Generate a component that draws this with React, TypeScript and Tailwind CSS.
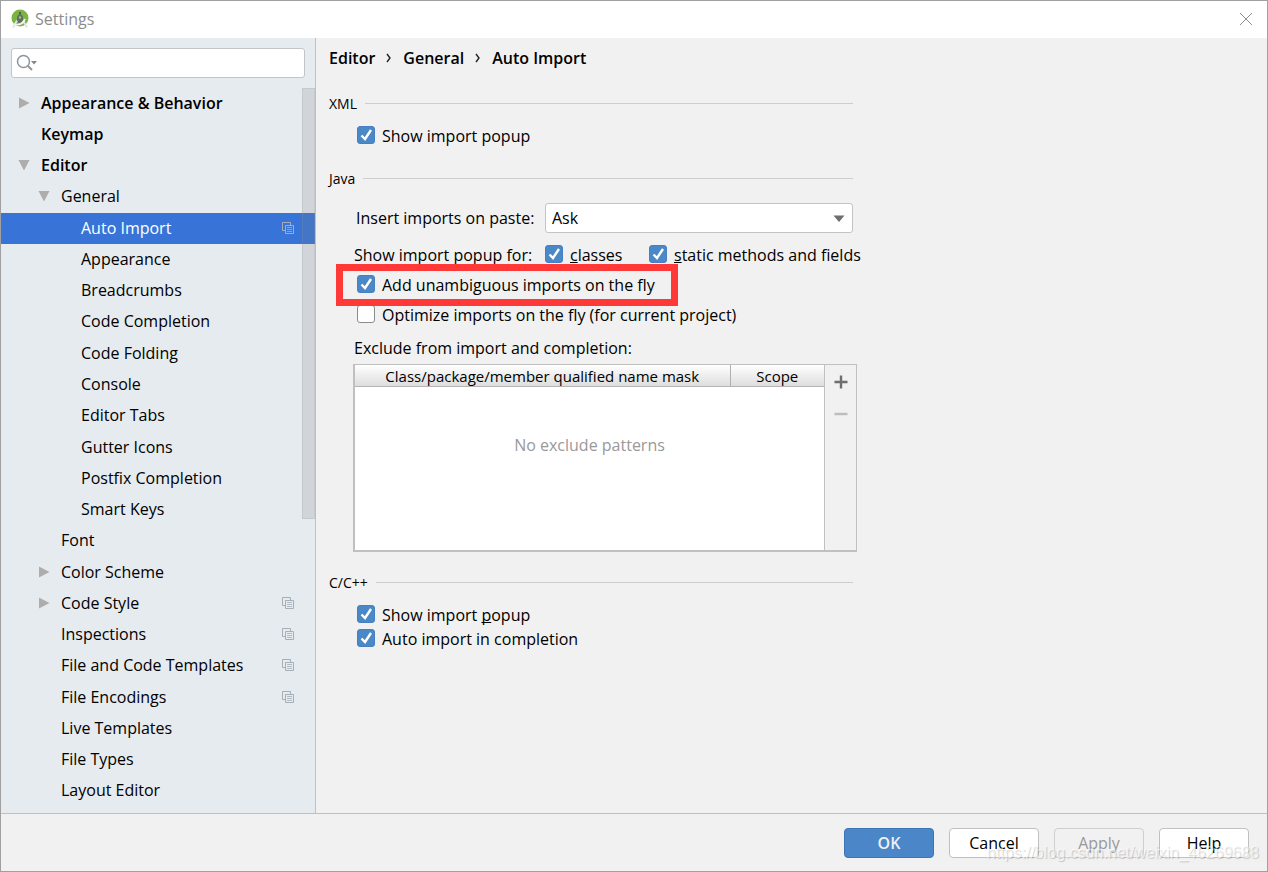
import { useState, type ReactNode } from 'react'
import { clsx } from 'clsx'

type TreeItem = {
  label: string
  level: 0 | 1 | 2
  state?: 'open' | 'closed'
  project?: boolean
}

const tree: TreeItem[] = [
  { label: 'Appearance & Behavior', level: 0, state: 'closed' },
  { label: 'Keymap', level: 0 },
  { label: 'Editor', level: 0, state: 'open' },
  { label: 'General', level: 1, state: 'open' },
  { label: 'Auto Import', level: 2, project: true },
  { label: 'Appearance', level: 2 },
  { label: 'Breadcrumbs', level: 2 },
  { label: 'Code Completion', level: 2 },
  { label: 'Code Folding', level: 2 },
  { label: 'Console', level: 2 },
  { label: 'Editor Tabs', level: 2 },
  { label: 'Gutter Icons', level: 2 },
  { label: 'Postfix Completion', level: 2 },
  { label: 'Smart Keys', level: 2 },
  { label: 'Font', level: 1 },
  { label: 'Color Scheme', level: 1, state: 'closed' },
  { label: 'Code Style', level: 1, state: 'closed', project: true },
  { label: 'Inspections', level: 1, project: true },
  { label: 'File and Code Templates', level: 1, project: true },
  { label: 'File Encodings', level: 1, project: true },
  { label: 'Live Templates', level: 1 },
  { label: 'File Types', level: 1 },
  { label: 'Layout Editor', level: 1 },
]

const indents = ['pl-[15px]', 'pl-[35px]', 'pl-[55px]']

function AppIcon() {
  return (
    <svg viewBox="0 0 18 20" className="h-5 w-[18px]" aria-hidden="true">
      <circle cx="9" cy="9" r="8.5" fill="#7cb342" />
      <path d="M9 3v3" stroke="#4b5b4b" strokeWidth="2" />
      <path d="M9 4l3 3.500v4L10.500 14h-3L6 11.500v-4z" fill="#5f6e66" />
      <circle cx="9" cy="8.5" r="1.2" fill="#9ccc65" />
      <path d="M6 11.500L2 18.500M12 11.500l4 7" stroke="#dfe4df" strokeWidth="1.8" />
      <path d="M3.500 15c4 1.500 9 0 10.500-5" stroke="#f3f6f0" strokeWidth="1.8" fill="none" />
    </svg>
  )
}

function Arrow({ state }: { state?: 'open' | 'closed' }) {
  return (
    <svg viewBox="0 0 16 16" className="h-4 w-4 shrink-0" fill="#adadad" aria-hidden="true">
      {state === 'closed' && <path d="M3 2.500L13.500 8 3 13.500z" />}
      {state === 'open' && <path d="M2.500 3h11L8 13.500z" />}
    </svg>
  )
}

function ProjectIcon() {
  return (
    <svg viewBox="0 0 12 12" className="h-3 w-3" fill="none" stroke="#a5afb8" aria-hidden="true">
      <path d="M3 8.500H.5v-8h8V3" />
      <path d="M3.500 3.500h8v8h-8z" />
      <path d="M5 5.500h5M5 7.500h5M5 9.500h5" strokeOpacity=".8" />
    </svg>
  )
}

function Checkbox({ children, checked = false, className }: { children: ReactNode; checked?: boolean; className?: string }) {
  return (
    <label className={clsx('flex h-6 w-fit items-center gap-[7px] whitespace-nowrap', className)}>
      <span className="grid h-[18px] w-[18px]">
        <input
          type="checkbox"
          defaultChecked={checked}
          className="peer col-start-1 row-start-1 h-[18px] w-[18px] appearance-none rounded-[3px] border border-[#8c8c8c] bg-white checked:border-[#4680c2] checked:bg-[#4a88c7]"
        />
        <svg
          viewBox="0 0 18 18"
          className="pointer-events-none invisible col-start-1 row-start-1 h-[18px] w-[18px] peer-checked:visible"
          fill="none"
          stroke="white"
          strokeWidth="2.4"
          aria-hidden="true"
        >
          <path d="M4.500 9.500L8 13l6-9" />
        </svg>
      </span>
      <span className="pt-0.5">{children}</span>
    </label>
  )
}

function Mnemonic({ children }: { children: ReactNode }) {
  return <u className="underline-offset-1 [text-decoration-skip-ink:none]">{children}</u>
}

function SectionTitle({ children, className }: { children: ReactNode; className?: string }) {
  return (
    <div className={clsx('flex h-6 items-center gap-2 pr-1', className)}>
      <h2 className="pt-px text-[14px]">{children}</h2>
      <span className="h-px flex-1 bg-[#cdcdcd]" />
    </div>
  )
}

function Sidebar() {
  const [selected, setSelected] = useState('Auto Import')

  return (
    <aside className="flex w-[315px] shrink-0 flex-col border-r border-[#c0c0c0] bg-[#e6ebf0]">
      <label className="mx-2.5 mt-2.5 flex h-[30px] items-center rounded-[3px] border border-[#c4c4c4] bg-white px-1">
        <svg viewBox="0 0 22 18" className="h-[18px] w-[22px] shrink-0" fill="none" stroke="#8c969f" aria-hidden="true">
          <circle cx="7.5" cy="7.5" r="6" strokeWidth="1.5" />
          <path d="M12 12l4 4" strokeWidth="2" />
          <path d="M15 7h6l-3 3.500z" fill="#7f8b91" stroke="none" />
        </svg>
        <input type="text" aria-label="Search settings" className="min-w-0 flex-1 outline-none" />
      </label>
      <nav className="relative mt-2.5 flex flex-1 flex-col pb-1.5">
        {tree.map((item) => (
          <button
            key={item.label}
            onClick={() => setSelected(item.label)}
            className={clsx(
              'flex flex-1 items-center gap-[9px] pr-[21px] pb-0.5 text-left whitespace-nowrap',
              indents[item.level],
              item.level === 0 && 'font-semibold',
              item.label === selected && 'bg-[#3874d8] text-white',
            )}
          >
            <Arrow state={item.state} />
            <span className="flex-1">{item.label}</span>
            {item.project && <ProjectIcon />}
          </button>
        ))}
        <span className="pointer-events-none absolute top-0 right-0 h-[431px] w-[13px] border border-[#9a9a9a]/20 bg-[#7f7f7f]/20" />
      </nav>
    </aside>
  )
}

function ExcludeTable() {
  return (
    <div className="mt-1 ml-6 flex h-[188px] border border-b-2 border-l-2 border-[#c0c0c0]">
      <div className="flex-1 bg-white">
        <table className="w-full border-collapse">
          <thead className="bg-linear-to-b from-white to-[#dcdcdc] text-[15px]">
            <tr className="border-b border-[#b5b5b5]">
              <th className="border-r border-[#b0b0b0] p-0 pt-0.5 leading-[19px] font-normal">
                Class/package/member qualified name mask
              </th>
              <th className="w-[94px] p-0 pt-0.5 leading-[19px] font-normal">Scope</th>
            </tr>
          </thead>
          <tbody>
            <tr>
              <td colSpan={2} className="pt-[46px] text-center text-[#999999]">
                No exclude patterns
              </td>
            </tr>
          </tbody>
        </table>
      </div>
      <div className="flex w-8 flex-col items-center border-l border-[#c0c0c0]">
        <button aria-label="Add" className="flex h-8 w-full items-center justify-center pt-0.5">
          <svg viewBox="0 0 14 14" className="h-3.5 w-3.5" stroke="#6e6e6e" strokeWidth="2.4" aria-hidden="true">
            <path d="M7 .5v13M.5 7h13" />
          </svg>
        </button>
        <button aria-label="Remove" disabled className="flex h-8 w-full items-center justify-center pt-0.5">
          <svg viewBox="0 0 14 14" className="h-3.5 w-3.5" stroke="#bdbdbd" strokeWidth="2.4" aria-hidden="true">
            <path d="M.5 7h13" />
          </svg>
        </button>
      </div>
    </div>
  )
}

function Crumb() {
  return (
    <svg viewBox="0 0 6 10" className="h-2.5 w-1.5" fill="none" stroke="#222" strokeWidth="1.4" aria-hidden="true">
      <path d="M1 1l3 4-3 4" />
    </svg>
  )
}

function AutoImportPage() {
  return (
    <main className="flex-1 pl-[13px]">
      <div className="max-w-[528px]">
        <h1 className="flex h-10 items-center gap-[11px] font-semibold">
          Editor <Crumb /> General <Crumb /> Auto Import
        </h1>

        <SectionTitle className="mt-[13px]">XML</SectionTitle>
        <Checkbox checked className="mt-2 ml-7">Show import popup</Checkbox>

        <SectionTitle className="mt-[19px]">Java</SectionTitle>
        <div className="mt-[13px] flex items-center pr-1 pl-[27px]">
          <label htmlFor="paste" className="w-[189px] whitespace-nowrap">Insert imports on paste:</label>
          <div className="grid flex-1 items-center">
            <select
              id="paste"
              className="col-start-1 row-start-1 h-[30px] appearance-none rounded-[3px] border border-[#c4c4c4] bg-white px-1.5"
            >
              <option>Ask</option>
              <option>All</option>
              <option>None</option>
            </select>
            <svg
              viewBox="0 0 12 7"
              className="pointer-events-none col-start-1 row-start-1 mr-2 h-[7px] w-3 justify-self-end"
              fill="#6e6e6e"
              aria-hidden="true"
            >
              <path d="M.5.5h11L6 7z" />
            </svg>
          </div>
        </div>
        <div className="mt-2 flex items-center pl-[25px] whitespace-nowrap">
          <span className="w-[191px] shrink-0 pt-0.5">Show import popup for:</span>
          <div className="w-[104px] shrink-0">
            <Checkbox checked><Mnemonic>c</Mnemonic>lasses</Checkbox>
          </div>
          <Checkbox checked><Mnemonic>s</Mnemonic>tatic methods and fields</Checkbox>
        </div>
        <div className="relative mt-[5px] ml-7 w-fit">
          <Checkbox checked>Add unambiguous imports on the fly</Checkbox>
          <span className="pointer-events-none absolute -top-2 -right-[23px] -bottom-2.5 -left-[21px] border-[7px] border-[#ff3838]" />
        </div>
        <Checkbox className="mt-1.5 ml-7">Optimize imports on the fly (for current project)</Checkbox>
        <p className="mt-2.5 pl-[25px]">Exclude from import and completion:</p>
        <ExcludeTable />

        <SectionTitle className="mt-[18px]">C/C++</SectionTitle>
        <Checkbox checked className="mt-2 ml-7">Show import <Mnemonic>p</Mnemonic>opup</Checkbox>
        <Checkbox checked className="ml-7">Auto import in completion</Checkbox>
      </div>
    </main>
  )
}

export default function App() {
  const button = 'h-[30px] w-[90px] rounded-[4px] border'

  return (
    <div className="relative flex min-h-screen flex-col border border-[#a0a0a0] bg-[#f1f1f1] font-['Open_Sans','Noto_Sans',sans-serif] text-[16px] leading-6 text-black">
      <header className="flex h-[37px] items-center gap-1.5 bg-white pr-3.5 pb-px pl-2.5">
        <AppIcon />
        <span className="flex-1 text-[#8c8c8c]">Settings</span>
        <button aria-label="Close">
          <svg viewBox="0 0 14 14" className="h-3.5 w-3.5" stroke="#8c8c8c" aria-hidden="true">
            <path d="M1 1l12 12M13 1L1 13" />
          </svg>
        </button>
      </header>
      <div className="flex flex-1">
        <Sidebar />
        <AutoImportPage />
      </div>
      <footer className="flex h-[58px] items-center justify-end gap-[15px] border-t border-[#c0c0c0] pr-[18px]">
        <button className={clsx(button, 'border-[#3d75b3] bg-[#4a86c8] font-semibold text-[#f0f0f0]')}>OK</button>
        <button className={clsx(button, 'border-[#c0c0c0] bg-white')}>Cancel</button>
        <button disabled className={clsx(button, 'border-[#cfcfcf] text-[#999999]')}>Apply</button>
        <button className={clsx(button, 'border-[#c0c0c0] bg-white')}>Help</button>
      </footer>
      <span className="pointer-events-none absolute right-2 bottom-1.5 font-['Liberation_Sans',sans-serif] text-[16px] text-white/60 [text-shadow:1px_1px_1px_rgba(0,0,0,0.18)]">
        https://blog.csdn.net/weixin_46269688
      </span>
    </div>
  )
}
